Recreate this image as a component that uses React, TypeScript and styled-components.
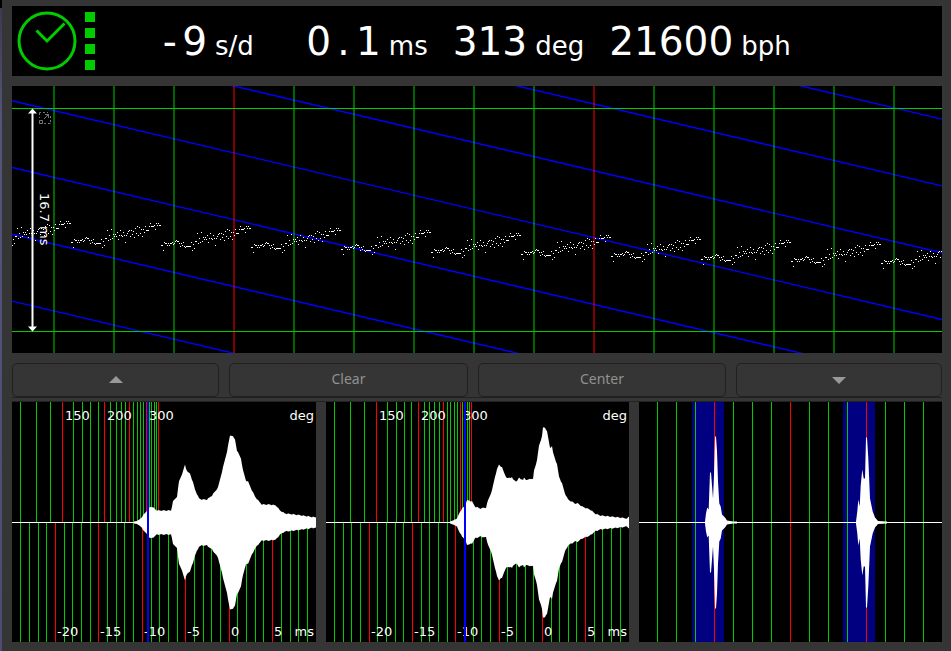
import React from "react";
import styled, { createGlobalStyle } from "styled-components";

const GREEN = "#00cc00";
const RED = "#ff0000";
const BLUE = "#0000ff";

const GlobalStyle = createGlobalStyle`
  * { box-sizing: border-box; }
  body { margin: 0; background: #353535; }
`;

const Window = styled.main`
  display: flex;
  min-height: 100vh;
  background: #353535;
  color: #ffffff;
  font-family: "DejaVu Sans", sans-serif;
`;

const DesktopEdge = styled.div`
  flex: 0 0 2px;
  background: linear-gradient(#000000 8px, #3a3a50 8px, #55557a 120px, #4c4c74 100%);
`;

const Content = styled.div`
  flex: 1;
  min-width: 0;
  display: flex;
  flex-direction: column;
  padding: 6px 9px 9px 10px;
`;

const Header = styled.header`
  display: flex;
  align-items: center;
  height: 70px;
  background: #000000;
  overflow: hidden;
`;

const SignalIcon = styled.svg`
  flex: none;
  display: block;
  margin-right: 29px;
`;

const Readouts = styled.div`
  display: flex;
  gap: 25px;
  padding-top: 6px;
`;

const Readout = styled.div`
  display: flex;
  align-items: baseline;
  gap: 8px;
  line-height: 48px;
  white-space: nowrap;
`;

const Value = styled.span<{ $width?: number }>`
  display: flex;
  justify-content: flex-end;
  min-width: ${(p) => p.$width ?? 0}px;
  font-size: 39px;
`;

const Glyph = styled.span`
  width: 25px;
  text-align: center;
`;

const Unit = styled.span`
  font-size: 26px;
`;

const Plot = styled.svg`
  display: block;
  width: 100%;
  height: auto;
  background: #000000;
  font-family: "DejaVu Sans", sans-serif;
  font-size: 13px;
`;

const StripSection = styled.section`
  margin-top: 10px;
`;

const Controls = styled.div`
  display: grid;
  grid-template-columns: 207fr 239fr 248fr 206fr;
  gap: 10px;
  margin-top: 10px;
`;

const ControlButton = styled.button`
  display: flex;
  align-items: center;
  justify-content: center;
  height: 34px;
  padding: 0 0 2px;
  border: 1px solid #202020;
  border-radius: 5px;
  background: #353535;
  color: #919190;
  font-family: "Noto Sans", sans-serif;
  font-size: 14px;
  line-height: 20px;
`;

const Separator = styled.div`
  height: 5px;
  border-top: 1px solid #222222;
  border-bottom: 1px solid #222222;
`;

const Waveforms = styled.section`
  display: grid;
  grid-template-columns: 304fr 303fr 303fr;
  gap: 10px;
  align-items: start;
`;

function ClockIcon() {
  return (
    <SignalIcon width="90" height="70" viewBox="0 0 90 70" aria-label="Signal quality" role="img">
      <circle cx="35" cy="35" r="28" fill="none" stroke={GREEN} strokeWidth="3" />
      <path d="M24.5 24.5 L35 35 L52.5 17.5" fill="none" stroke={GREEN} strokeWidth="3" />
      {[6, 22, 38, 54].map((y) => (
        <rect key={y} x="73" y={y} width="10" height="10" fill={GREEN} />
      ))}
    </SignalIcon>
  );
}

/* Timing error of each beat over one turn of the escape wheel, in plot pixels. */
const BEATS = [
  0, 0, 5, -3, -2, -2, 0, -2, 0, -2, -2, -3, -1, -2, -4, -5, -4, -4, -2, 1, -2, 0, -3, 1, 2, 1, 1, 1,
  1, 1, -3, 5, -1, 3, -4, -4, -12, -2, -7, -3, -13, -4, -8, -6, -8, -6, -10, -3, -7, -12, -7, -6,
  -10, -7, 0, -7, -9, -11, -12, -6, -12, -8, -11, -5, -14, -9, -16, -7, -15, -9, -13, -6, -13, -10,
  -16, -12, -12, -12, -16, -19, -16, -16, -16, -17, -13, -19, -17, -19, -17, -17,
];

const range = (n: number) => Array.from({ length: n }, (_, i) => i);

function beatPath() {
  let d = "";
  for (let turn = 0; turn < 11; turn++) {
    BEATS.forEach((offset, i) => {
      const x = turn * 90 - 31 + i;
      const y = Math.round(154 + turn * 2.34 + offset);
      if (x >= 0) d += `M${x} ${y}h1v1h-1z`;
    });
  }
  return d;
}

function PaperStrip() {
  return (
    <Plot viewBox="0 0 930 267" role="img" aria-label="Paper strip">
      {range(7).map((k) => {
        const y = -185.7 + k * 66.8;
        return <line key={k} x1="0" y1={y} x2="930" y2={y + 218.8} stroke={BLUE} strokeWidth="1.4" />;
      })}
      {range(15).map((k) => (
        <line
          key={k}
          x1={42 + k * 60}
          x2={42 + k * 60}
          y1="0"
          y2="267"
          stroke={k % 6 === 3 ? RED : GREEN}
          strokeWidth="1"
        />
      ))}
      <path d="M0 22h930v1h-930zM0 245h930v1h-930z" fill={GREEN} />
      <path d="M20.5 27V241" stroke="#ffffff" strokeWidth="2" />
      <path d="M20.5 22.5L25 27.5H16zM20.5 245.5L25 240.5H16z" fill="#ffffff" />
      <g fill="none" stroke="#777777" strokeWidth="1">
        <path d="M27.5 29V26.5H29M31 26.5H33M35 26.5H36M38.5 30V32M38.5 34V36M38.5 37.5H36M34 37.5H32M27.5 31V32" />
        <path d="M27.5 34.5h3v3h-3z" />
        <path d="M32 33L36.5 28.5M33 28.5H36.5V32" />
      </g>
      <text transform="translate(28 107) rotate(90)" fill="#ffffff">
        16.7 ms
      </text>
      <path d={beatPath()} fill="#ffffff" />
    </Plot>
  );
}

type Point = [number, number];

/* Fills in the column between two points and adds the fine ripple of the signal. */
function resample(points: Point[]): Point[] {
  const out: Point[] = [];
  for (let i = 0; i < points.length - 1; i++) {
    const [x0, a0] = points[i];
    const [x1, a1] = points[i + 1];
    for (let x = x0; x < x1; x++) {
      const ripple = (((x * 7919) % 5) - 2) * 0.25;
      const a = a0 + ((a1 - a0) * (x - x0)) / (x1 - x0);
      out.push([x, a > 4 ? a + ripple : a]);
    }
  }
  out.push(points[points.length - 1]);
  return out;
}

/* Mirrors an amplitude envelope around the zero line. */
function envelope(points: Point[]) {
  const top = points.map(([x, a]) => `${x} ${120.5 - a}`);
  const bottom = [...points].reverse().map(([x, a]) => `${x} ${120.5 + a}`);
  return `M${[...top, ...bottom].join("L")}Z`;
}

const bars = (xs: number[], y: number, h: number) => xs.map((x) => `M${x} ${y}h1v${h}h-1z`).join("");

interface Wave {
  name: string;
  width: number;
  degGreen: number[];
  degRed: number[];
  msStart: number;
  msStep: number;
  marker: number;
  points: Point[];
}

const TIC: Wave = {
  name: "Tic",
  width: 304,
  degGreen: [8, 24, 38, 61, 70, 78, 86, 98, 104, 109, 113, 121, 125, 128, 131, 137, 139, 142, 144],
  degRed: [50, 92, 117, 134, 146],
  msStart: 8.66,
  msStep: 8.69,
  marker: 135,
  points: [
    [122, 1], [125, 1.5], [128, 3.5], [131, 7], [135, 12], [136, 14], [139, 16], [141, 15], [145, 12],
    [151, 12], [159, 12], [161, 21], [165, 26], [167, 41], [171, 51], [173, 58], [174, 54], [176, 50],
    [178, 49], [181, 40], [183, 33], [187, 24], [190, 23], [195, 23], [200, 27], [206, 35], [209, 47],
    [212, 59], [215, 71], [218, 87], [220, 87], [223, 83], [225, 72], [229, 64], [231, 52], [234, 42],
    [236, 41], [240, 32], [243, 26], [247, 21], [250, 18], [258, 18], [264, 17], [268, 12], [273, 9],
    [283, 8], [290, 7], [304, 5],
  ],
};

const TOC: Wave = {
  name: "Toc",
  width: 303,
  degGreen: [8, 24, 38, 61, 70, 78, 85, 98, 103, 108, 113, 121, 124, 128, 131, 136, 139, 141, 143],
  degRed: [50, 92, 117, 134, 145],
  msStart: 8.5,
  msStep: 8.66,
  marker: 138,
  points: [
    [124, 1], [127, 2], [131, 4], [134, 11], [138, 16], [141, 22], [143, 22], [146, 21], [149, 16],
    [154, 14], [160, 15], [162, 22], [166, 32], [169, 46], [171, 53], [173, 58], [176, 55], [178, 50],
    [181, 44], [184, 45], [186, 45], [187, 43], [191, 41], [193, 45], [197, 42], [198, 45], [201, 42],
    [204, 44], [207, 43], [208, 52], [211, 62], [213, 77], [216, 86], [217, 95], [219, 95], [221, 91],
    [224, 75], [226, 76], [227, 70], [231, 58], [233, 46], [236, 39], [239, 29], [242, 23], [249, 19],
    [252, 19], [256, 16], [264, 13], [269, 9], [274, 7], [284, 6], [294, 5], [301, 4], [303, 6],
  ],
};

function BeatWave({ wave }: { wave: Wave }) {
  const ms = range(34).map((i) => Math.floor(wave.msStart + wave.msStep * i));
  const msRed = ms.filter((_, i) => i % 5 === 4);
  const msGreen = ms.filter((_, i) => i % 5 !== 4);
  const degLabels: [string, number][] = [["150", 0], ["200", 1], ["300", 3]];
  return (
    <Plot viewBox={`0 0 ${wave.width} 240`} role="img" aria-label={`${wave.name} waveform`}>
      <path d={bars(wave.degGreen, 0, 120) + bars(msGreen, 121, 119)} fill={GREEN} />
      <path d={bars(wave.degRed, 0, 120) + bars(msRed, 121, 119)} fill={RED} />
      <g fill="#ffffff">
        {degLabels.map(([label, i]) => (
          <text key={label} x={wave.degRed[i] + 3} y="18">{label}</text>
        ))}
        <text x={wave.width - 2} y="18" textAnchor="end">deg</text>
        {["-20", "-15", "-10", "-5", "0", "5"].map((label, i) => (
          <text key={label} x={msRed[i] + 2} y="234">{label}</text>
        ))}
        <text x={wave.width - 2} y="234" textAnchor="end">ms</text>
        <path d={`M0 120h${wave.width}v1h-${wave.width}z`} />
        <path d={envelope(resample(wave.points))} />
      </g>
      <rect x={wave.marker} y="0" width="2" height="240" fill={BLUE} />
    </Plot>
  );
}

const FIRST_BEAT: Point[] = [
  [66, 1], [67, 9], [68.3, 15], [69.7, 13], [70.3, 31], [71, 50], [72, 50], [73, 37], [74, 24], [75, 47],
  [76, 86], [77, 86], [78, 71], [79, 41], [80.3, 19], [81.7, 16], [83, 8], [86, 5], [88, 2], [94, 1],
  [98, 1],
];

const SECOND_BEAT: Point[] = [
  [217, 1], [218.3, 11], [219.3, 23], [220.7, 16], [221.7, 37], [223.3, 53], [224.7, 44], [226, 44],
  [227, 85], [228, 85], [229.3, 64], [231, 24], [233.7, 11], [236, 5], [239, 1.5], [248, 1],
];

function PeriodWave() {
  const xs = range(15).map((i) => 18 + 19 * i);
  return (
    <Plot viewBox="0 0 303 240" role="img" aria-label="Full period waveform">
      <path d="M53 0h32v240h-32zM204 0h32v240h-32z" fill="#000080" />
      <path d={bars(xs.filter((_, i) => i % 4 !== 3), 0, 240)} fill={GREEN} />
      <path d={bars(xs.filter((_, i) => i % 4 === 3), 0, 240)} fill={RED} />
      <path d="M0 120h303v1h-303z" fill="#ffffff" />
      <path d={envelope(FIRST_BEAT) + envelope(SECOND_BEAT)} fill="#ffffff" />
    </Plot>
  );
}

function Arrow({ down }: { down?: boolean }) {
  return (
    <svg width="14" height="9" viewBox="0 0 14 9" fill="#999997" aria-hidden="true">
      <path d={down ? "M0 2H14L7 9Z" : "M0 8H14L7 1Z"} />
    </svg>
  );
}

export default function App() {
  return (
    <Window>
      <GlobalStyle />
      <DesktopEdge />
      <Content>
        <Header>
          <ClockIcon />
          <Readouts>
            <Readout>
              <Value $width={76}><Glyph>-</Glyph>9</Value>
              <Unit>s/d</Unit>
            </Readout>
            <Readout>
              <Value $width={102}>0<Glyph>.</Glyph>1</Value>
              <Unit>ms</Unit>
            </Readout>
            <Readout>
              <Value>313</Value>
              <Unit>deg</Unit>
            </Readout>
            <Readout>
              <Value>21600</Value>
              <Unit>bph</Unit>
            </Readout>
          </Readouts>
        </Header>
        <StripSection>
          <PaperStrip />
        </StripSection>
        <Controls>
          <ControlButton type="button" aria-label="Shift up"><Arrow /></ControlButton>
          <ControlButton type="button">Clear</ControlButton>
          <ControlButton type="button">Center</ControlButton>
          <ControlButton type="button" aria-label="Shift down"><Arrow down /></ControlButton>
        </Controls>
        <Separator />
        <Waveforms>
          <BeatWave wave={TIC} />
          <BeatWave wave={TOC} />
          <PeriodWave />
        </Waveforms>
      </Content>
    </Window>
  );
}
